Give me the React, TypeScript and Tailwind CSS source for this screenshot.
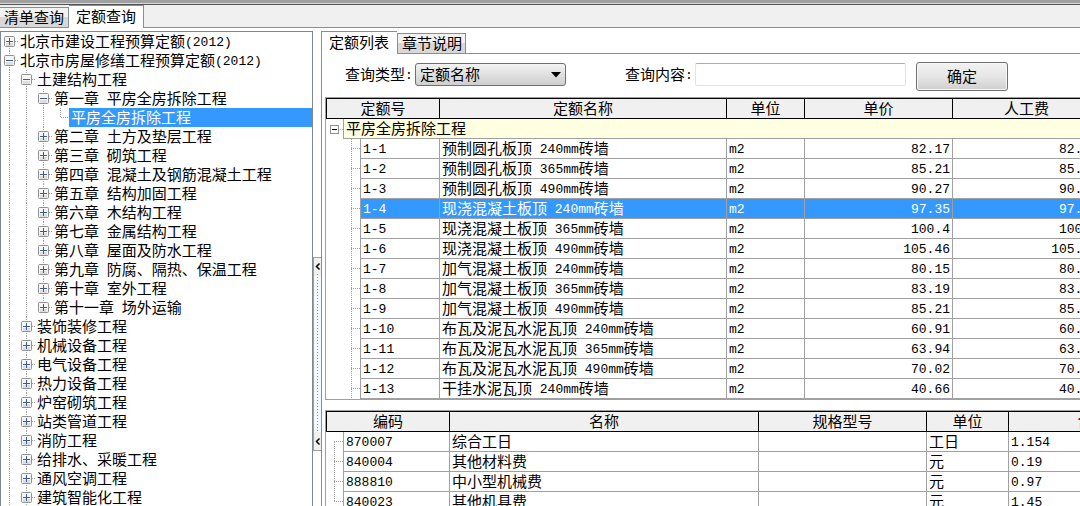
import { useState } from "react";
import clsx from "clsx";

type TreeNode = {
  label: string;
  depth: number;
  kind: "plus" | "minus" | "leaf";
  first?: boolean;
  last?: boolean;
};

const TREE: TreeNode[] = [
  { label: "北京市建设工程预算定额(2012)", depth: 0, kind: "plus", first: true },
  { label: "北京市房屋修缮工程预算定额(2012)", depth: 0, kind: "minus" },
  { label: "土建结构工程", depth: 1, kind: "minus" },
  { label: "第一章 平房全房拆除工程", depth: 2, kind: "minus" },
  { label: "平房全房拆除工程", depth: 3, kind: "leaf" },
  { label: "第二章 土方及垫层工程", depth: 2, kind: "plus" },
  { label: "第三章 砌筑工程", depth: 2, kind: "plus" },
  { label: "第四章 混凝土及钢筋混凝土工程", depth: 2, kind: "plus" },
  { label: "第五章 结构加固工程", depth: 2, kind: "plus" },
  { label: "第六章 木结构工程", depth: 2, kind: "plus" },
  { label: "第七章 金属结构工程", depth: 2, kind: "plus" },
  { label: "第八章 屋面及防水工程", depth: 2, kind: "plus" },
  { label: "第九章 防腐、隔热、保温工程", depth: 2, kind: "plus" },
  { label: "第十章 室外工程", depth: 2, kind: "plus" },
  { label: "第十一章 场外运输", depth: 2, kind: "plus", last: true },
  { label: "装饰装修工程", depth: 1, kind: "plus" },
  { label: "机械设备工程", depth: 1, kind: "plus" },
  { label: "电气设备工程", depth: 1, kind: "plus" },
  { label: "热力设备工程", depth: 1, kind: "plus" },
  { label: "炉窑砌筑工程", depth: 1, kind: "plus" },
  { label: "站类管道工程", depth: 1, kind: "plus" },
  { label: "消防工程", depth: 1, kind: "plus" },
  { label: "给排水、采暖工程", depth: 1, kind: "plus" },
  { label: "通风空调工程", depth: 1, kind: "plus" },
  { label: "建筑智能化工程", depth: 1, kind: "plus" },
];

const QUOTAS = [
  { id: "1-1", name: "预制圆孔板顶 240mm砖墙", price: "82.17" },
  { id: "1-2", name: "预制圆孔板顶 365mm砖墙", price: "85.21" },
  { id: "1-3", name: "预制圆孔板顶 490mm砖墙", price: "90.27" },
  { id: "1-4", name: "现浇混凝土板顶 240mm砖墙", price: "97.35" },
  { id: "1-5", name: "现浇混凝土板顶 365mm砖墙", price: "100.4" },
  { id: "1-6", name: "现浇混凝土板顶 490mm砖墙", price: "105.46" },
  { id: "1-7", name: "加气混凝土板顶 240mm砖墙", price: "80.15" },
  { id: "1-8", name: "加气混凝土板顶 365mm砖墙", price: "83.19" },
  { id: "1-9", name: "加气混凝土板顶 490mm砖墙", price: "85.21" },
  { id: "1-10", name: "布瓦及泥瓦水泥瓦顶 240mm砖墙", price: "60.91" },
  { id: "1-11", name: "布瓦及泥瓦水泥瓦顶 365mm砖墙", price: "63.94" },
  { id: "1-12", name: "布瓦及泥瓦水泥瓦顶 490mm砖墙", price: "70.02" },
  { id: "1-13", name: "干挂水泥瓦顶 240mm砖墙", price: "40.66" },
];

const RESOURCES = [
  { code: "870007", name: "综合工日", unit: "工日", amount: "1.154" },
  { code: "840004", name: "其他材料费", unit: "元", amount: "0.19" },
  { code: "888810", name: "中小型机械费", unit: "元", amount: "0.97" },
  { code: "840023", name: "其他机具费", unit: "元", amount: "1.45" },
];

const HEAD = "h-[21px] border-y border-r border-black bg-[#f0f0f0] px-0 pt-0 pb-0.5 text-center font-normal";
const CELL = "h-5 border-b border-r border-[#a0a0a0] px-0.5 pt-0 pb-0.5";
const TAB_OFF = "border border-[#8b8d94] bg-linear-to-b from-[#f2f2f2] from-50% to-[#d8d8d8] to-50%";

// half-width characters are set in a smaller monospace face
function Txt({ children }: { children: string }) {
  return (
    <>
      {children.split(/([\x20-\x7e]+)/).map((part, i) =>
        i % 2 ? (
          <span key={i} className="whitespace-pre align-[1px] font-['Liberation_Mono',monospace] text-[13px] leading-[10px]">
            {part}
          </span>
        ) : (
          part
        ),
      )}
    </>
  );
}

function Dots({ d }: { d: string }) {
  return <path d={d} stroke="#a0a0a0" strokeDasharray="1 1" fill="none" />;
}

function Toggle({ node }: { node: TreeNode }) {
  const vertical = node.first ? "M8.5 10V19" : node.last ? "M8.5 0V9" : "M8.5 0V19";
  return (
    <button type="button" aria-label={node.kind === "plus" ? "展开" : "折叠"} className="shrink-0">
      <svg width="17" height="19" className="block">
        <Dots d={vertical} />
        <Dots d="M14 9.5H17" />
        <rect x="3.5" y="4.5" width="10" height="10" rx="1" fill="#f6f6f6" stroke="#919191" />
        <path d="M5 12.5H12" stroke="#dedede" strokeWidth="3" />
        <path d={node.kind === "plus" ? "M5 9.5H12M8.5 6V13" : "M5 9.5H12"} stroke="#3d5a99" />
      </svg>
    </button>
  );
}

function TreeRow({ node, selected, onSelect }: { node: TreeNode; selected: boolean; onSelect: () => void }) {
  return (
    <li className="flex h-[19px] items-stretch">
      {Array.from({ length: node.depth }, (_, i) => (
        <svg key={i} width="17" height="19" className="shrink-0">
          <Dots d="M8.5 0V19" />
        </svg>
      ))}
      {node.kind === "leaf" ? (
        <svg width="17" height="19" className="shrink-0">
          <Dots d="M8.5 0V9.5H17" />
        </svg>
      ) : (
        <Toggle node={node} />
      )}
      <button
        type="button"
        onClick={onSelect}
        className={clsx(
          "flex-1 whitespace-nowrap pb-0.5 pl-0.5 text-left leading-[17px]",
          selected && "bg-[#3399ff] text-white",
        )}>
        <Txt>{node.label}</Txt>
      </button>
    </li>
  );
}

function QuotaTable() {
  const [active, setActive] = useState("1-4");

  return (
    <div className="shrink-0 overflow-hidden border border-r-0 border-[#a0a0a0]">
      <table className="w-[775px] min-w-full table-fixed border-separate border-spacing-0 whitespace-nowrap leading-[17px]">
        <colgroup>
          <col className="w-[18px]" />
          <col className="w-[17px]" />
          <col className="w-[79px]" />
          <col className="w-[287px]" />
          <col className="w-[78px]" />
          <col className="w-[148px]" />
          <col className="w-[148px]" />
        </colgroup>
        <thead>
          <tr>
            <th colSpan={3} className={clsx(HEAD, "border-l")}>定额号</th>
            <th className={HEAD}>定额名称</th>
            <th className={HEAD}>单位</th>
            <th className={HEAD}>单价</th>
            <th className={HEAD}>人工费</th>
          </tr>
        </thead>
        <tbody>
          <tr>
            <td className="border-r border-[#a0a0a0] p-0">
              <button type="button" aria-label="折叠" className="block">
                <svg width="17" height="19" className="block">
                  <rect x="4.5" y="5.5" width="8" height="8" fill="#fff" stroke="#919191" />
                  <path d="M6 9.5H11" stroke="#000" />
                  <Dots d="M14 9.5H17" />
                </svg>
              </button>
            </td>
            <td colSpan={6} className={clsx(CELL, "bg-[#ffffe1]")}>平房全房拆除工程</td>
          </tr>
          {QUOTAS.map((q) => {
            const on = q.id === active;
            const cell = clsx(CELL, on && "bg-[#3399ff] text-white");
            return (
              <tr key={q.id} onClick={() => setActive(q.id)}>
                <td colSpan={2} className="border-r border-[#a0a0a0] p-0">
                  <svg width="34" height="20" className="block">
                    <Dots d="M25.5 0V20" />
                    <Dots d="M25 9.5H34" />
                  </svg>
                </td>
                <td className={cell}><Txt>{q.id}</Txt></td>
                <td className={cell}><Txt>{q.name}</Txt></td>
                <td className={cell}><Txt>m2</Txt></td>
                <td className={clsx(cell, "text-right")}><Txt>{q.price}</Txt></td>
                <td className={clsx(cell, "text-right")}><Txt>{q.price}</Txt></td>
              </tr>
            );
          })}
        </tbody>
      </table>
    </div>
  );
}

function ResourceTable() {
  return (
    <div className="min-h-0 flex-1 overflow-hidden border-l border-t border-[#a0a0a0]">
      <table className="w-[851px] min-w-full table-fixed border-separate border-spacing-0 whitespace-nowrap leading-[17px]">
        <colgroup>
          <col className="w-[18px]" />
          <col className="w-[106px]" />
          <col className="w-[309px]" />
          <col className="w-[168px]" />
          <col className="w-[82px]" />
          <col className="w-[168px]" />
        </colgroup>
        <thead>
          <tr>
            <th colSpan={2} className={clsx(HEAD, "border-l")}>编码</th>
            <th className={HEAD}>名称</th>
            <th className={HEAD}>规格型号</th>
            <th className={HEAD}>单位</th>
            <th className={HEAD}>含量</th>
          </tr>
        </thead>
        <tbody>
          {RESOURCES.map((r, i) => (
            <tr key={r.code}>
              <td className="border-r border-[#a0a0a0] p-0">
                <svg width="17" height="20" className="block">
                  {i > 0 && <Dots d="M8.5 0V10" />}
                  {i < RESOURCES.length - 1 && <Dots d="M8.5 10V20" />}
                  <Dots d="M8 9.5H17" />
                </svg>
              </td>
              <td className={CELL}><Txt>{r.code}</Txt></td>
              <td className={CELL}>{r.name}</td>
              <td className={CELL}></td>
              <td className={CELL}>{r.unit}</td>
              <td className={CELL}><Txt>{r.amount}</Txt></td>
            </tr>
          ))}
        </tbody>
      </table>
    </div>
  );
}

function SearchBar() {
  return (
    <form className="flex h-[43px] items-start pl-[23px] pt-2" onSubmit={(e) => e.preventDefault()}>
      <label htmlFor="type" className="w-[70px] shrink-0 whitespace-nowrap pt-px leading-[22px]">
        <Txt>查询类型:</Txt>
      </label>
      <div className="relative mt-px w-[151px] shrink-0">
        <select
          id="type"
          className="block h-[23px] w-full appearance-none rounded-[3px] border border-[#707070] bg-linear-to-b from-[#f2f2f2] to-[#cfcfcf] pb-0.5 pl-1 leading-[19px]">
          <option>定额名称</option>
          <option>定额号</option>
        </select>
        <svg width="10" height="6" className="pointer-events-none absolute right-[5px] top-[9px]">
          <path d="M0 0H10L5 5.5Z" />
        </svg>
      </div>
      <label htmlFor="keyword" className="ml-[59px] w-[70px] shrink-0 whitespace-nowrap pt-px leading-[22px]">
        <Txt>查询内容:</Txt>
      </label>
      <input
        id="keyword"
        type="text"
        className="mt-px h-[23px] w-[211px] rounded-[2px] border border-[#e2e3ea] border-t-[#abadb3] bg-white px-1"
      />
      <button
        type="submit"
        className="ml-2.5 h-[29px] w-[92px] rounded-[3px] border border-[#707070] bg-linear-to-b from-[#f2f2f2] via-[#e6e6e6] to-[#cfcfcf] pb-0.5 shadow-[inset_0_0_0_1px_#f6f6f6]">
        确定
      </button>
    </form>
  );
}

export default function App() {
  const [selected, setSelected] = useState(4);

  return (
    <div className="flex h-screen flex-col overflow-hidden bg-white font-['Noto_Sans_CJK_SC',sans-serif] text-[15px] leading-5 text-black">
      <div className="h-[5px] shrink-0 border-b border-[#555] bg-[#a0a0a0] shadow-[inset_0_-1px_0_#d8d8d8]" />

      <nav className="flex h-[23px] shrink-0 items-end bg-[#f0f0f0] shadow-[inset_0_-1px_0_#8b8d94]">
        <button type="button" className={clsx(TAB_OFF, "h-[21px] w-[69px] whitespace-nowrap border-l-0 px-1 pb-0.5 text-left leading-[17px]")}>
          清单查询
        </button>
        <button type="button" className="h-[23px] w-[75px] whitespace-nowrap border-r border-t border-[#8b8d94] bg-white pb-1 pl-[7px] text-left leading-[17px]">
          定额查询
        </button>
      </nav>

      <main className="flex min-h-0 flex-1 pt-[3px]">
        <ul className="w-[313px] shrink-0 overflow-hidden border border-b-0 border-[#828790]">
          {TREE.map((node, i) => (
            <TreeRow key={node.label + i} node={node} selected={i === selected} onSelect={() => setSelected(i)} />
          ))}
        </ul>

        <div className="w-2 shrink-0 pt-[226px]">
          <button
            type="button"
            aria-label="收起"
            className="block h-[194px] w-full border border-r-0 border-[#a0a0a0] bg-[#f0f0f0]">
            <svg width="7" height="192" className="block">
              <rect x="0" y="18" width="7" height="156" fill="#f3f9fd" />
              <path d="M3.5 16V174" stroke="#5a9fd4" strokeDasharray="1 2" />
              <path d="M5.5 5.5L2.5 8.5L5.5 11.5M5.5 180.5L2.5 183.5L5.5 186.5" stroke="#000" strokeWidth="1.5" fill="none" />
            </svg>
          </button>
        </div>

        <section className="flex min-w-0 flex-1 flex-col border-l border-[#8b8d94]">
          <nav className="flex h-[23px] shrink-0 items-end shadow-[inset_0_-1px_0_#8b8d94]">
            <button type="button" className="h-[23px] w-[75px] whitespace-nowrap border-t border-[#8b8d94] bg-white pb-1 pl-[7px] text-left leading-[17px]">
              定额列表
            </button>
            <button type="button" className={clsx(TAB_OFF, "h-[21px] w-[69px] whitespace-nowrap px-1 pb-0.5 text-left leading-[17px]")}>
              章节说明
            </button>
          </nav>
          <SearchBar />
          <div className="flex min-h-0 flex-1 flex-col gap-2.5 pl-[3px]">
            <QuotaTable />
            <ResourceTable />
          </div>
        </section>
      </main>
    </div>
  );
}
